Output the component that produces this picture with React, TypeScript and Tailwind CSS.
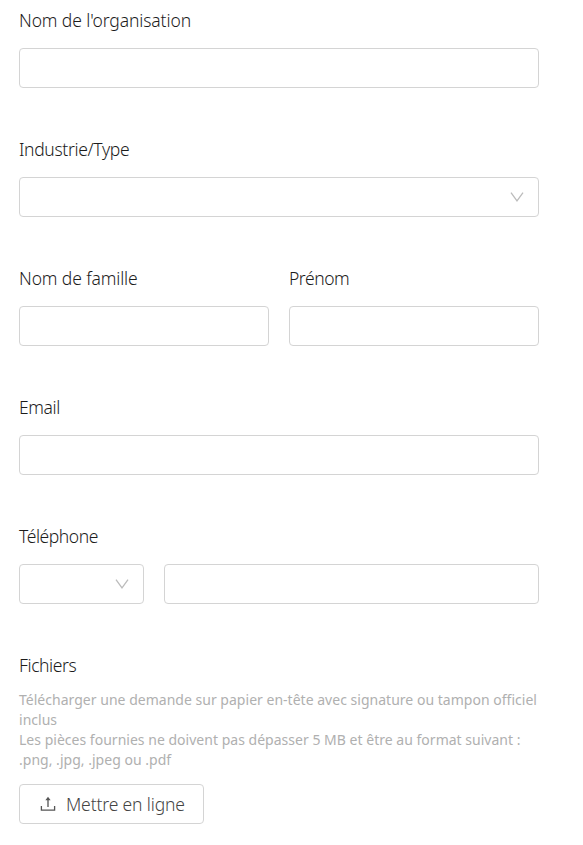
import { useRef } from "react";
import type { ReactNode } from "react";

type FieldProps = {
  label: string;
  id: string;
  className?: string;
  labelClass?: string;
  children: ReactNode;
};

const inputClass =
  "block h-10 w-full rounded border border-[#d4d4d4] bg-white px-3 text-[17px] focus:outline-none focus:border-blue-400";

function Field({ label, id, className = "", labelClass = "", children }: FieldProps) {
  return (
    <div className={className}>
      <label
        htmlFor={id}
        className={`mb-[17px] block h-[21px] text-[17.5px] leading-[20px] text-[#1c1c1c] ${labelClass}`}
      >
        {label}
      </label>
      {children}
    </div>
  );
}

function Select({ id }: { id: string }) {
  return (
    <button
      id={id}
      type="button"
      className="flex h-10 w-full items-center justify-end rounded border border-[#d4d4d4] bg-white pr-[14px]"
    >
      <svg className="h-[10px] w-[14px]" viewBox="0 0 14 10" fill="none" stroke="#bcbcbc" strokeWidth="1.3">
        <path d="M1 .7 7 8.9 13 .7" />
      </svg>
    </button>
  );
}

function UploadIcon() {
  return (
    <svg className="mr-[10px] h-[16px] w-[16px]" viewBox="0 0 16 16" fill="none" stroke="#555" strokeWidth="1.3">
      <path d="M1.4 10v4.2h13.2V10M8 11V2.5" />
      <path d="M8 .8 10.6 4.3H5.4z" fill="#555" stroke="none" />
    </svg>
  );
}

export default function App() {
  const fileRef = useRef<HTMLInputElement>(null);

  return (
    <form className="ml-[19px] w-[520px] pt-[10px] font-['Noto_Sans','Open_Sans',sans-serif] font-light">
      <div className="space-y-[51px]">
        <Field label="Nom de l'organisation" id="organisation" labelClass="tracking-[-0.11px]">
          <input id="organisation" className={inputClass} />
        </Field>

        <Field label="Industrie/Type" id="industry" labelClass="tracking-[-0.33px]">
          <Select id="industry" />
        </Field>

        <div className="flex gap-5">
          <Field label="Nom de famille" id="lastName" className="flex-1" labelClass="tracking-[-0.12px]">
            <input id="lastName" className={inputClass} />
          </Field>
          <Field label="Prénom" id="firstName" className="flex-1" labelClass="tracking-[-0.45px]">
            <input id="firstName" className={inputClass} />
          </Field>
        </div>

        <Field label="Email" id="email" labelClass="tracking-[-0.4px]">
          <input id="email" type="email" className={inputClass} />
        </Field>

        <Field label="Téléphone" id="phone" labelClass="tracking-[-0.42px]">
          <div className="flex gap-5">
            <div className="w-[125px]">
              <Select id="phoneCode" />
            </div>
            <div className="flex-1">
              <input id="phone" type="tel" className={inputClass} />
            </div>
          </div>
        </Field>

        <div>
          <p className="mb-[14px] h-[21px] text-[17.5px] leading-[20px] tracking-[-0.4px] text-[#1c1c1c]">
            Fichiers
          </p>
          <div className="mb-[14px] text-[14px] leading-5 font-normal tracking-[0.018px] whitespace-nowrap text-[#b0b0b0]">
            <p>
              Télécharger une demande sur papier en-tête avec signature ou tampon officiel
              <br />
              inclus
            </p>
            <p>
              Les pièces fournies ne doivent pas dépasser 5 MB et être au format suivant :
              <br />
              .png, .jpg, .jpeg ou .pdf
            </p>
          </div>
          <input ref={fileRef} type="file" accept=".png,.jpg,.jpeg,.pdf" className="hidden" />
          <button
            type="button"
            onClick={() => fileRef.current?.click()}
            className="flex h-10 w-[185px] items-center rounded border border-[#d4d4d4] pl-[20px] text-[17.5px] tracking-[-0.14px] text-[#444]"
          >
            <UploadIcon />
            <span className="whitespace-nowrap">Mettre en ligne</span>
          </button>
        </div>
      </div>
    </form>
  );
}
